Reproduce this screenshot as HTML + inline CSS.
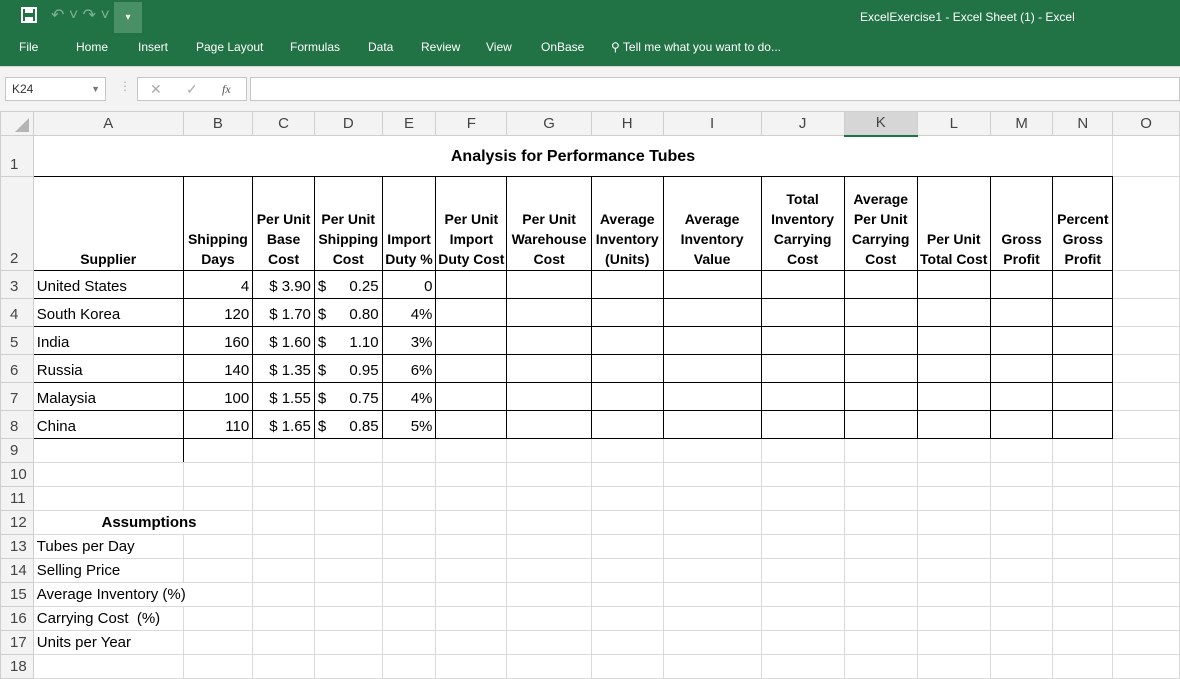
<!DOCTYPE html>
<html><head><meta charset="utf-8"><style>
*{margin:0;padding:0;box-sizing:border-box}
body{width:1180px;height:666px;overflow:hidden;background:#fff;font-family:"Liberation Sans",sans-serif;position:relative}
.top{position:absolute;left:0;top:0;width:1180px;height:66px;background:#217346;color:#fff}
.tab{position:absolute;top:40px;font-size:12px}
.fb{position:absolute;left:0;top:66px;width:1180px;height:45px;background:#f3f3f3;border-top:1px solid #d6d6d6}
table{position:absolute;left:0;top:111px;border-collapse:collapse;table-layout:fixed;font-size:15px}
td{border:1px solid #d9d9d9;padding:0 3px;white-space:nowrap;overflow:hidden;vertical-align:bottom;line-height:17px;padding-bottom:3px}
td.h{background:#f3f3f3;color:#444;text-align:center;vertical-align:middle;padding:0;border-color:#cfcfcf;line-height:20px}
td.rh{background:#f3f3f3;color:#444;text-align:left;padding-left:9px;border-color:#cfcfcf;font-size:15px}
td.b{border:1px solid #000}
.hd td.b{font-weight:bold;text-align:center;font-size:14px;line-height:20px;padding:0 1px 1px}
.r{text-align:right}
.acc span{float:left}
</style></head><body>
<div class="top">
 <svg style="position:absolute;left:21px;top:7px" width="16" height="16" viewBox="0 0 16 16"><rect x="1" y="1" width="14" height="14" fill="none" stroke="#fff" stroke-width="2"/><rect x="4" y="2" width="8" height="4" fill="#fff"/><rect x="4" y="10" width="8" height="4" fill="#fff"/></svg>
 <div style="position:absolute;left:51px;top:5px;color:#7fb295;font-size:16px">↶ ˅ ↷ ˅</div>
 <div style="position:absolute;left:114px;top:2px;width:28px;height:31px;background:#4a9067;color:#fff;text-align:center;font-size:10px;line-height:31px">▾</div>
 <div style="position:absolute;left:860px;top:10px;font-size:12px">ExcelExercise1 - Excel Sheet (1) - Excel</div>
 <div class="tab" style="left:19px">File</div>
 <div class="tab" style="left:76px">Home</div>
 <div class="tab" style="left:138px">Insert</div>
 <div class="tab" style="left:196px">Page Layout</div>
 <div class="tab" style="left:290px">Formulas</div>
 <div class="tab" style="left:368px">Data</div>
 <div class="tab" style="left:421px">Review</div>
 <div class="tab" style="left:486px">View</div>
 <div class="tab" style="left:541px">OnBase</div>
 <div class="tab" style="left:611px">⚲ Tell me what you want to do...</div>
</div>
<div class="fb">
 <div style="position:absolute;left:5px;top:10px;width:101px;height:24px;background:#fff;border:1px solid #c6c6c6;font-size:12px;line-height:22px;padding-left:6px;color:#333">K24<span style="position:absolute;right:5px;color:#777;font-size:9px">▼</span></div>
 <div style="position:absolute;left:119px;top:12px;color:#aaa;font-size:12px">⋮</div>
 <div style="position:absolute;left:137px;top:10px;width:110px;height:24px;background:#fff;border:1px solid #c6c6c6;color:#aaa;font-size:14px;line-height:22px"><span style="position:absolute;left:12px">✕</span><span style="position:absolute;left:48px">✓</span><span style="position:absolute;left:84px;font-family:'Liberation Serif',serif;font-style:italic;color:#555;font-size:12px">fx</span></div>
 <div style="position:absolute;left:250px;top:10px;width:930px;height:24px;background:#fff;border:1px solid #c6c6c6"></div>
</div>
<table>
<colgroup><col style="width:33px"><col style="width:151px"><col style="width:70px"><col style="width:62px"><col style="width:68px"><col style="width:54px"><col style="width:71px"><col style="width:85px"><col style="width:72px"><col style="width:100px"><col style="width:84px"><col style="width:74px"><col style="width:73px"><col style="width:64px"><col style="width:60px"><col style="width:70px"></colgroup>
<tr style="height:24px"><td class="h" style="font-size:0;line-height:0;position:relative"><svg width="18" height="14" style="position:absolute;left:12px;top:6px"><polygon points="16,0 16,14 2,14" fill="#b5b5b5"/></svg></td><td class="h">A</td><td class="h">B</td><td class="h">C</td><td class="h">D</td><td class="h">E</td><td class="h">F</td><td class="h">G</td><td class="h">H</td><td class="h">I</td><td class="h">J</td><td class="h" style="background:#d6d6d6;border-bottom:2px solid #217346">K</td><td class="h">L</td><td class="h">M</td><td class="h">N</td><td class="h">O</td></tr>
<tr style="height:41px"><td class="rh">1</td><td colspan="14" style="text-align:center;font-weight:bold;font-size:16px;vertical-align:middle;padding:0;border-bottom:1px solid #000">Analysis for Performance Tubes</td><td></td></tr>
<tr style="height:94px" class="hd"><td class="rh" style="font-weight:normal">2</td><td class="b">Supplier</td><td class="b">Shipping<br>Days</td><td class="b">Per Unit<br>Base<br>Cost</td><td class="b">Per Unit<br>Shipping<br>Cost</td><td class="b">Import<br>Duty %</td><td class="b">Per Unit<br>Import<br>Duty Cost</td><td class="b">Per Unit<br>Warehouse<br>Cost</td><td class="b">Average<br>Inventory<br>(Units)</td><td class="b">Average<br>Inventory<br>Value</td><td class="b">Total<br>Inventory<br>Carrying<br>Cost</td><td class="b">Average<br>Per Unit<br>Carrying<br>Cost</td><td class="b">Per Unit<br>Total Cost</td><td class="b">Gross<br>Profit</td><td class="b">Percent<br>Gross<br>Profit</td><td></td></tr>
<tr style="height:28px"><td class="rh">3</td><td class="b">United States</td><td class="b r">4</td><td class="b r">$ 3.90</td><td class="b r acc"><span>$</span>0.25</td><td class="b r">0</td><td class="b"></td><td class="b"></td><td class="b"></td><td class="b"></td><td class="b"></td><td class="b"></td><td class="b"></td><td class="b"></td><td class="b"></td><td></td></tr>
<tr style="height:28px"><td class="rh">4</td><td class="b">South Korea</td><td class="b r">120</td><td class="b r">$ 1.70</td><td class="b r acc"><span>$</span>0.80</td><td class="b r">4%</td><td class="b"></td><td class="b"></td><td class="b"></td><td class="b"></td><td class="b"></td><td class="b"></td><td class="b"></td><td class="b"></td><td class="b"></td><td></td></tr>
<tr style="height:28px"><td class="rh">5</td><td class="b">India</td><td class="b r">160</td><td class="b r">$ 1.60</td><td class="b r acc"><span>$</span>1.10</td><td class="b r">3%</td><td class="b"></td><td class="b"></td><td class="b"></td><td class="b"></td><td class="b"></td><td class="b"></td><td class="b"></td><td class="b"></td><td class="b"></td><td></td></tr>
<tr style="height:28px"><td class="rh">6</td><td class="b">Russia</td><td class="b r">140</td><td class="b r">$ 1.35</td><td class="b r acc"><span>$</span>0.95</td><td class="b r">6%</td><td class="b"></td><td class="b"></td><td class="b"></td><td class="b"></td><td class="b"></td><td class="b"></td><td class="b"></td><td class="b"></td><td class="b"></td><td></td></tr>
<tr style="height:28px"><td class="rh">7</td><td class="b">Malaysia</td><td class="b r">100</td><td class="b r">$ 1.55</td><td class="b r acc"><span>$</span>0.75</td><td class="b r">4%</td><td class="b"></td><td class="b"></td><td class="b"></td><td class="b"></td><td class="b"></td><td class="b"></td><td class="b"></td><td class="b"></td><td class="b"></td><td></td></tr>
<tr style="height:28px"><td class="rh">8</td><td class="b">China</td><td class="b r">110</td><td class="b r">$ 1.65</td><td class="b r acc"><span>$</span>0.85</td><td class="b r">5%</td><td class="b"></td><td class="b"></td><td class="b"></td><td class="b"></td><td class="b"></td><td class="b"></td><td class="b"></td><td class="b"></td><td class="b"></td><td></td></tr>
<tr style="height:24px"><td class="rh">9</td><td style="border-right:1px solid #000"></td><td></td><td></td><td></td><td></td><td></td><td></td><td></td><td></td><td></td><td></td><td></td><td></td><td></td><td></td></tr>
<tr style="height:24px"><td class="rh">10</td><td></td><td></td><td></td><td></td><td></td><td></td><td></td><td></td><td></td><td></td><td></td><td></td><td></td><td></td><td></td></tr>
<tr style="height:24px"><td class="rh">11</td><td></td><td></td><td></td><td></td><td></td><td></td><td></td><td></td><td></td><td></td><td></td><td></td><td></td><td></td><td></td></tr>
<tr style="height:24px"><td class="rh">12</td><td colspan="2" style="text-align:center;font-weight:bold;padding:0 0 3px 12px">Assumptions</td><td></td><td></td><td></td><td></td><td></td><td></td><td></td><td></td><td></td><td></td><td></td><td></td><td></td></tr>
<tr style="height:24px"><td class="rh">13</td><td>Tubes per Day</td><td></td><td></td><td></td><td></td><td></td><td></td><td></td><td></td><td></td><td></td><td></td><td></td><td></td><td></td></tr>
<tr style="height:24px"><td class="rh">14</td><td>Selling Price</td><td></td><td></td><td></td><td></td><td></td><td></td><td></td><td></td><td></td><td></td><td></td><td></td><td></td><td></td></tr>
<tr style="height:24px"><td class="rh">15</td><td colspan="2">Average Inventory (%)</td><td></td><td></td><td></td><td></td><td></td><td></td><td></td><td></td><td></td><td></td><td></td><td></td><td></td></tr>
<tr style="height:24px"><td class="rh">16</td><td>Carrying Cost&nbsp; (%)</td><td></td><td></td><td></td><td></td><td></td><td></td><td></td><td></td><td></td><td></td><td></td><td></td><td></td><td></td></tr>
<tr style="height:24px"><td class="rh">17</td><td>Units per Year</td><td></td><td></td><td></td><td></td><td></td><td></td><td></td><td></td><td></td><td></td><td></td><td></td><td></td><td></td></tr>
<tr style="height:24px"><td class="rh">18</td><td></td><td></td><td></td><td></td><td></td><td></td><td></td><td></td><td></td><td></td><td></td><td></td><td></td><td></td><td></td></tr>
</table>
</body></html>
